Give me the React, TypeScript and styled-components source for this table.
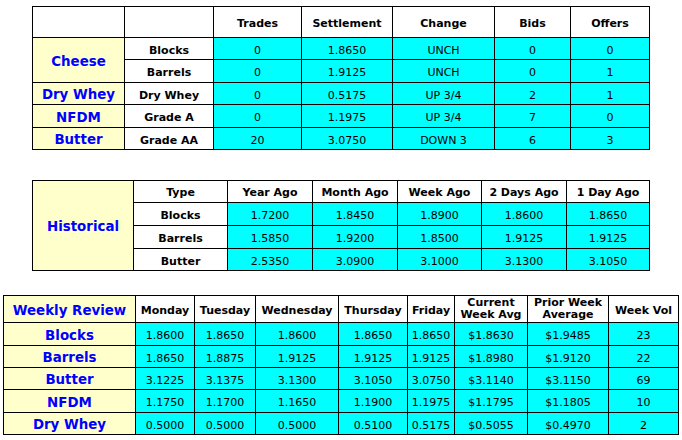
import React from "react";
import styled, { createGlobalStyle } from "styled-components";

const GlobalStyle = createGlobalStyle`
  html, body {
    margin: 0;
    padding: 0;
    background: #ffffff;
  }
  body {
    font-family: "DejaVu Sans", Verdana, sans-serif;
    color: #000000;
  }
`;

const Page = styled.div`
  display: flex;
  flex-direction: column;
  align-items: center;
  padding-top: 6px;
`;

const Table = styled.table<{ $width: number; $gap?: number }>`
  border-collapse: collapse;
  table-layout: fixed;
  width: ${(p) => p.$width}px;
  margin-bottom: ${(p) => p.$gap ?? 0}px;
  td,
  th {
    border: 1px solid #000000;
    padding: 3px 0 0 0;
    text-align: center;
    vertical-align: middle;
    overflow: hidden;
    white-space: nowrap;
  }
`;

const Row = styled.tr<{ $h: number }>`
  height: ${(p) => p.$h}px;
`;

const HeadCell = styled.th<{ $wrap?: boolean }>`
  background: #ffffff;
  font-size: 11px;
  font-weight: bold;
  line-height: 12px;
  color: #000000;
  && {
    white-space: ${(p) => (p.$wrap ? "normal" : "nowrap")};
    padding-top: ${(p) => (p.$wrap ? 0 : 3)}px;
  }
`;

const BlankCell = styled.th`
  background: #ffffff;
`;

const LabelCell = styled.td`
  background: #ffffcc;
  color: #0000ff;
  font-size: 13.4px;
  line-height: 16px;
  font-weight: bold;
`;

const SubCell = styled.td`
  background: #ffffff;
  font-size: 11px;
  line-height: 13px;
  font-weight: bold;
  color: #000000;
`;

const ValueCell = styled.td`
  background: #00ffff;
  font-size: 11px;
  line-height: 13px;
  color: #000000;
`;

type MarketRow = {
  group?: string;
  span?: number;
  type: string;
  values: string[];
};

const marketCols = [92, 89, 88, 91, 102, 76, 79];
const marketHeights = [22, 23, 22, 23, 22];
const marketRows: MarketRow[] = [
  { group: "Cheese", span: 2, type: "Blocks", values: ["0", "1.8650", "UNCH", "0", "0"] },
  { type: "Barrels", values: ["0", "1.9125", "UNCH", "0", "1"] },
  { group: "Dry Whey", span: 1, type: "Dry Whey", values: ["0", "0.5175", "UP 3/4", "2", "1"] },
  { group: "NFDM", span: 1, type: "Grade A", values: ["0", "1.1975", "UP 3/4", "7", "0"] },
  { group: "Butter", span: 1, type: "Grade AA", values: ["20", "3.0750", "DOWN 3", "6", "3"] },
];

const histCols = [101, 94, 85, 85, 84, 85, 83];
const histHeights = [23, 23, 22];
const histHeaders = ["Type", "Year Ago", "Month Ago", "Week Ago", "2 Days Ago", "1 Day Ago"];
const histRows = [
  { type: "Blocks", values: ["1.7200", "1.8450", "1.8900", "1.8600", "1.8650"] },
  { type: "Barrels", values: ["1.5850", "1.9200", "1.8500", "1.9125", "1.9125"] },
  { type: "Butter", values: ["2.5350", "3.0900", "3.1000", "3.1300", "3.1050"] },
];

const weekCols = [132, 59, 61, 83, 69, 47, 73, 81, 70];
const weekHeights = [23, 22, 22, 23, 22];
const weekHeaders: { label: React.ReactNode; wrap?: boolean }[] = [
  { label: "Monday" },
  { label: "Tuesday" },
  { label: "Wednesday" },
  { label: "Thursday" },
  { label: "Friday" },
  { label: <>Current<br />Week Avg</>, wrap: true },
  { label: <>Prior Week<br />Average</>, wrap: true },
  { label: "Week Vol" },
];
const weekRows = [
  { name: "Blocks", values: ["1.8600", "1.8650", "1.8600", "1.8650", "1.8650", "$1.8630", "$1.9485", "23"] },
  { name: "Barrels", values: ["1.8650", "1.8875", "1.9125", "1.9125", "1.9125", "$1.8980", "$1.9120", "22"] },
  { name: "Butter", values: ["3.1225", "3.1375", "3.1300", "3.1050", "3.0750", "$3.1140", "$3.1150", "69"] },
  { name: "NFDM", values: ["1.1750", "1.1700", "1.1650", "1.1900", "1.1975", "$1.1795", "$1.1805", "10"] },
  { name: "Dry Whey", values: ["0.5000", "0.5000", "0.5000", "0.5100", "0.5175", "$0.5055", "$0.4970", "2"] },
];

const sum = (a: number[]) => a.reduce((s, v) => s + v, 0) + 1;

const Cols = ({ widths }: { widths: number[] }) => (
  <colgroup>
    {widths.map((w, i) => (
      <col key={i} style={{ width: w }} />
    ))}
  </colgroup>
);

export default function App() {
  return (
    <>
      <GlobalStyle />
      <Page>
        <Table $width={sum(marketCols)} $gap={30}>
          <Cols widths={marketCols} />
          <thead>
            <Row $h={31}>
              <BlankCell />
              <BlankCell />
              <HeadCell>Trades</HeadCell>
              <HeadCell>Settlement</HeadCell>
              <HeadCell>Change</HeadCell>
              <HeadCell>Bids</HeadCell>
              <HeadCell>Offers</HeadCell>
            </Row>
          </thead>
          <tbody>
            {marketRows.map((r, i) => (
              <Row key={i} $h={marketHeights[i]}>
                {r.group && <LabelCell rowSpan={r.span}>{r.group}</LabelCell>}
                <SubCell>{r.type}</SubCell>
                {r.values.map((v, j) => (
                  <ValueCell key={j}>{v}</ValueCell>
                ))}
              </Row>
            ))}
          </tbody>
        </Table>

        <Table $width={sum(histCols)} $gap={24}>
          <Cols widths={histCols} />
          <tbody>
            <Row $h={22}>
              <LabelCell rowSpan={4}>Historical</LabelCell>
              {histHeaders.map((h) => (
                <HeadCell key={h}>{h}</HeadCell>
              ))}
            </Row>
            {histRows.map((r, i) => (
              <Row key={r.type} $h={histHeights[i]}>
                <SubCell>{r.type}</SubCell>
                {r.values.map((v, j) => (
                  <ValueCell key={j}>{v}</ValueCell>
                ))}
              </Row>
            ))}
          </tbody>
        </Table>

        <Table $width={sum(weekCols)}>
          <Cols widths={weekCols} />
          <thead>
            <Row $h={27}>
              <LabelCell as="th">Weekly Review</LabelCell>
              {weekHeaders.map((h, i) => (
                <HeadCell key={i} $wrap={h.wrap}>
                  {h.label}
                </HeadCell>
              ))}
            </Row>
          </thead>
          <tbody>
            {weekRows.map((r, i) => (
              <Row key={r.name} $h={weekHeights[i]}>
                <LabelCell>{r.name}</LabelCell>
                {r.values.map((v, j) => (
                  <ValueCell key={j}>{v}</ValueCell>
                ))}
              </Row>
            ))}
          </tbody>
        </Table>
      </Page>
    </>
  );
}
